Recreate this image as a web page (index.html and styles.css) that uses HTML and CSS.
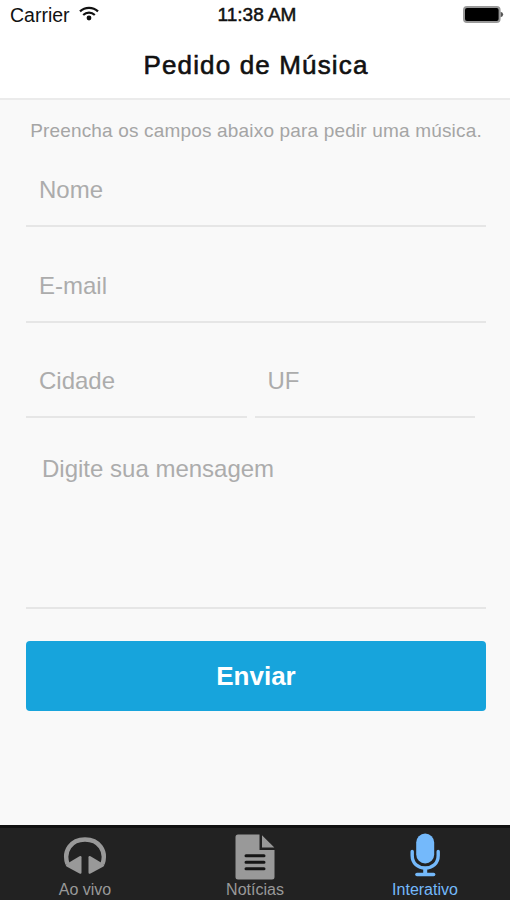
FILE: index.html
```html
<!DOCTYPE html>
<html lang="pt-BR">
<head>
  <meta charset="UTF-8" />
  <meta name="viewport" content="width=device-width, initial-scale=1.0"/>
  <title>Pedido de Música</title>
  <link rel="stylesheet" href="styles.css">
</head>
<body>
  <header class="header">
    <div class="status">
      <div class="carrier">
        <span>Carrier</span>
        <svg width="20" height="15" viewBox="0 0 20 15" fill="none" stroke="#111" stroke-width="2.2">
          <path d="M1 5.4a13 13 0 0 1 18 0" />
          <path d="M4.2 9a8.4 8.4 0 0 1 11.6 0" />
          <circle cx="10" cy="12" r="2.4" fill="#111" stroke="none" />
        </svg>
      </div>
      <span class="time">11:38 AM</span>
      <svg class="battery" width="41" height="17" viewBox="0 0 41 17">
        <rect x="1" y="1" width="35.6" height="15" rx="3" fill="#000" stroke="#999" stroke-width="2" />
        <path d="M37.6 5.8q2.6.4 2.6 2.7t-2.6 2.7z" fill="#555" />
      </svg>
    </div>
    <h1 class="title">Pedido de Música</h1>
  </header>

  <main class="content">
    <p class="intro">Preencha os campos abaixo para pedir uma música.</p>
    <form id="pedidoForm" class="form">
      <input class="field" type="text" placeholder="Nome" />
      <input class="field" type="text" placeholder="E-mail" />
      <div class="row">
        <input class="field" type="text" placeholder="Cidade" />
        <input class="field" type="text" placeholder="UF" />
      </div>
      <textarea class="field message" placeholder="Digite sua mensagem"></textarea>
      <button class="send" type="submit">Enviar</button>
    </form>
  </main>

  <nav class="tabs">
    <a class="tab">
      <svg width="44" height="44" viewBox="0 0 44 44" fill="#999">
        <path d="M4.5 28C0 15 8 3.500 22 3.500S44 15 39.500 28" fill="none" stroke="#999" stroke-width="4.4" />
        <path d="M16.500 20.300q2-1 2 1V36.500q0 2-2 1L3.500 30.500q-1.500-1.500 0-2.500z" />
        <path d="M27.500 20.300q-2-1-2 1V36.500q0 2 2 1l13-7q1.500-1.500 0-2.500z" />
      </svg>
      <span>Ao vivo</span>
    </a>
    <a class="tab">
      <svg width="40" height="46" viewBox="0 0 40 46">
        <path d="M3 .5h21.5v15.500h15V43q0 2.500-2.500 2.500H3Q.5 45.500.5 43V3Q.5.500 3 .5z" fill="#999" />
        <path d="M27 1.200v12.300h12.300z" fill="#999" />
        <path d="M11 21.800h18M11 28.300h18M11 34.800h18" stroke="#151515" stroke-width="3" stroke-linecap="round" />
      </svg>
      <span>Notícias</span>
    </a>
    <a class="tab active">
      <svg class="mic" width="30" height="44" viewBox="0 0 30 44" fill="none" stroke="#74b9fb">
        <rect x="6.2" y=".5" width="18" height="30" rx="9" fill="#74b9fb" stroke="none" />
        <path d="M2.200 18.500v4C2.200 30.500 8 35 15.200 35s13-4.500 13-12.500v-4" stroke-width="3.4" stroke-linecap="round" />
        <path d="M15.200 35v6" stroke-width="4" />
        <path d="M7 41.500h16.600" stroke-width="3.6" stroke-linecap="round" />
      </svg>
      <span>Interativo</span>
    </a>
  </nav>
</body>
</html>
```

FILE: styles.css
```css
* { box-sizing: border-box; }
body {
  margin: 0; height: 900px; display: flex; flex-direction: column; overflow: hidden;
  font-family: "Liberation Sans", Arial, sans-serif; background: #f9f9f9; color: #111;
}
.header { height: 100px; background: #fff; border-bottom: 2px solid #ebebeb; }
.status {
  display: grid; grid-template-columns: 1fr auto 1fr; align-items: center;
  height: 30px; padding: 0 6px 0 10px; font-size: 19.5px;
}
.carrier { display: flex; align-items: center; gap: 9px; }
.carrier svg { margin-bottom: 3px; }
.time { font-size: 19px; -webkit-text-stroke: 0.5px #111; }
.battery { justify-self: end; margin-bottom: 1px; }
.title {
  margin: 0; padding-left: 2px; font-size: 26px; font-weight: normal; line-height: 71px; letter-spacing: 1.15px;
  text-align: center; color: #111; -webkit-text-stroke: 0.6px #111;
}

.content { flex: 1; padding: 0 24px 0 26px; }
.intro { margin: 0; padding-top: 20px; line-height: 22px; font-size: 19px; letter-spacing: 0.17px; text-align: center; color: #a5a5a5; white-space: nowrap; }
.form { display: flex; flex-direction: column; margin-top: 13px; }
.field {
  display: block; width: 100%; height: 72px; margin-bottom: 24px; padding: 0 13px; border: none;
  border-bottom: 2px solid #e6e6e6; border-radius: 0; background: none; outline: none;
  font-family: inherit; font-size: 24px; color: #333;
}
.field::placeholder { color: #acacac; opacity: 1; }
.row { display: flex; gap: 8px; margin-top: -1px; padding-right: 11px; }
.row .field { margin-bottom: 23px; }
.message { height: 168px; margin-bottom: 32px; padding: 14px 16px; line-height: 28px; resize: none; }
.send {
  height: 70px; border: none; border-radius: 4px; background: #17a4dc;
  font-family: inherit; font-size: 26px; font-weight: bold; color: #fff;
}

.tabs { display: flex; height: 75px; border-top: 3px solid #111; background: #222; }
.tab { flex: 1; display: flex; flex-direction: column; align-items: center; justify-content: flex-end; font-size: 16px; line-height: 20px; color: #999; }
.active { color: #74b9fb; }
.mic { margin-bottom: 3px; }
```
